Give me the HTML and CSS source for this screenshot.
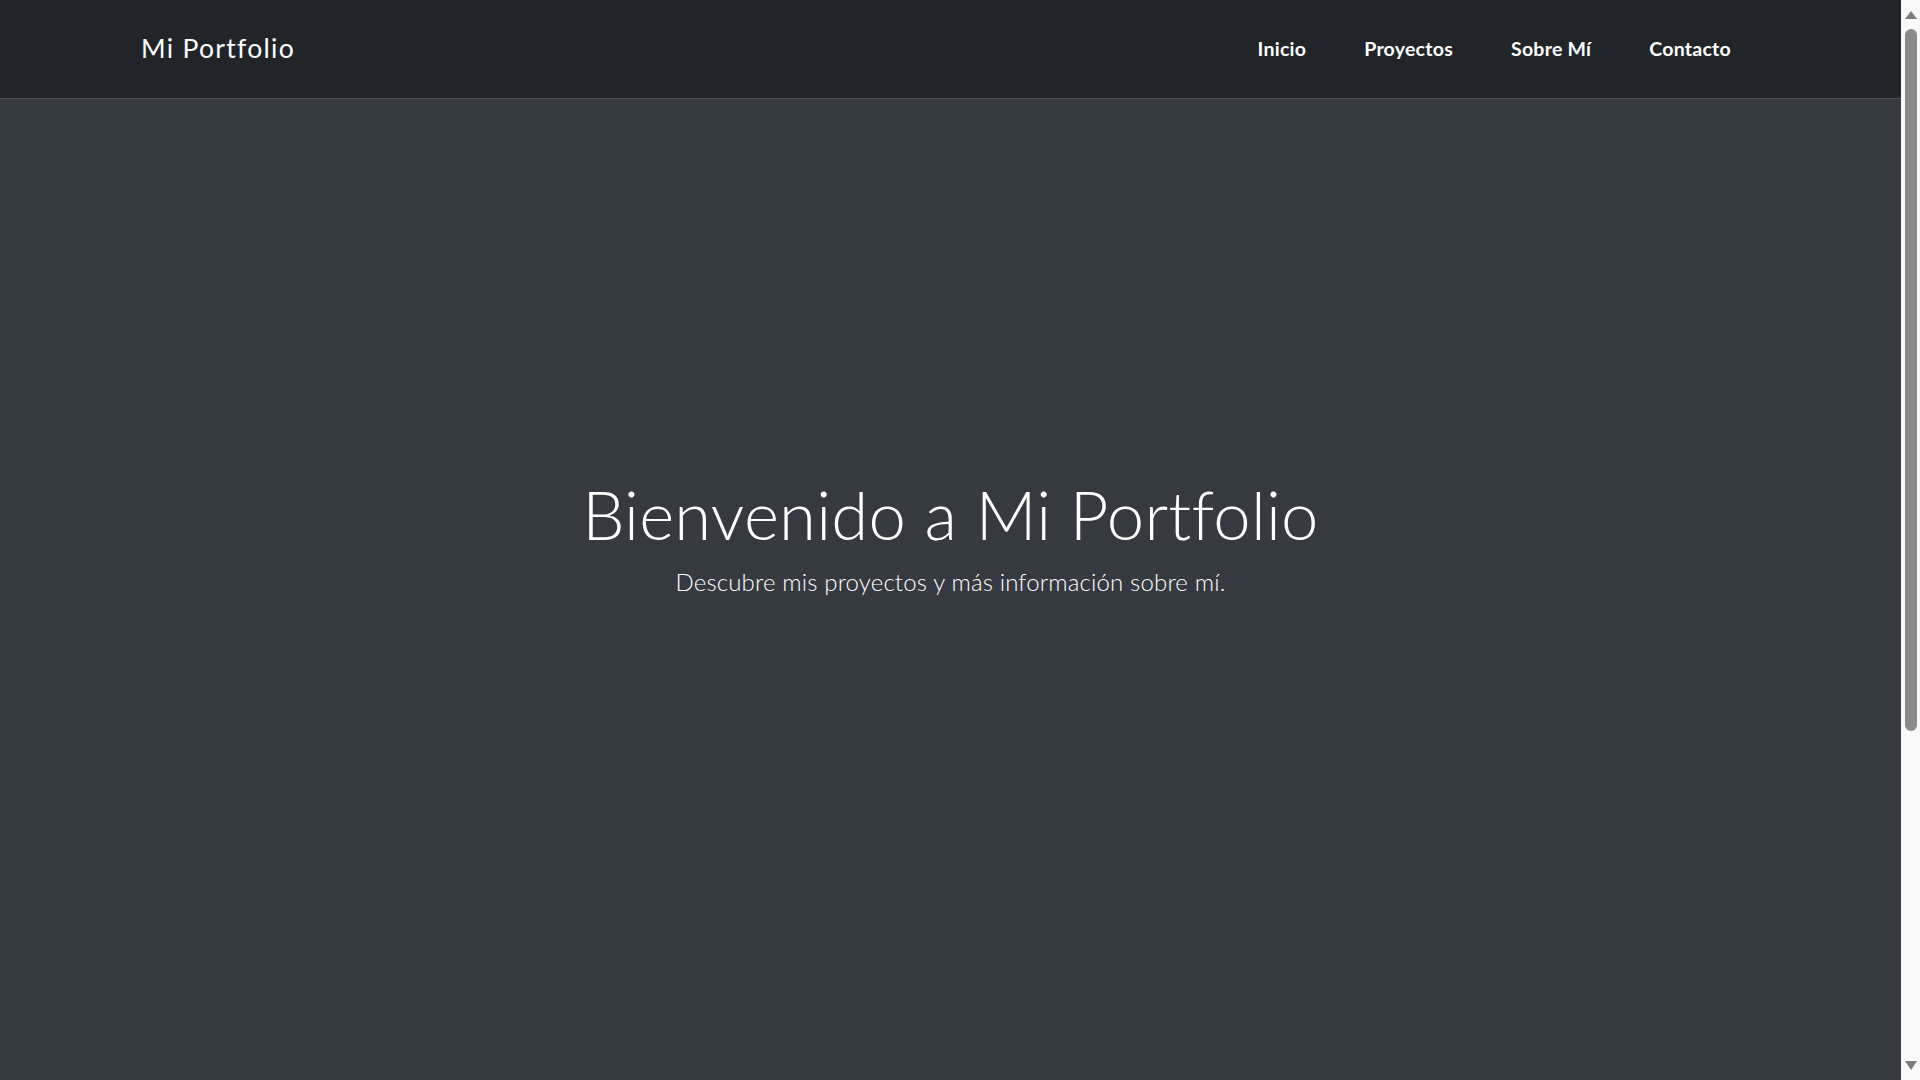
FILE: index.html
```html
<!DOCTYPE html>
<html lang="es">
<head>
<meta charset="utf-8">
<title>Mi Portfolio</title>
<link rel="stylesheet" href="styles.css">
</head>
<body>
<div class="app">
  <div class="page">
    <header class="navbar">
      <a class="brand" href="#">Mi Portfolio</a>
      <nav class="nav">
        <a class="nav-link" href="#inicio">Inicio</a>
        <a class="nav-link" href="#proyectos">Proyectos</a>
        <a class="nav-link" href="#sobre">Sobre Mí</a>
        <a class="nav-link" href="#contacto">Contacto</a>
      </nav>
    </header>
    <main class="hero" id="inicio">
      <h1 class="hero-title">Bienvenido a Mi Portfolio</h1>
      <p class="hero-lead">Descubre mis proyectos y más información sobre mí.</p>
    </main>
  </div>
  <div class="scrollbar" aria-hidden="true">
    <svg class="sb-arrow" width="12" height="8" viewBox="0 0 12 8"><polygon points="6,0 12,8 0,8" fill="#7d7d7d"/></svg>
    <div class="sb-thumb"></div>
    <div class="sb-space"></div>
    <svg class="sb-arrow" width="12" height="9" viewBox="0 0 12 9"><polygon points="0,0 12,0 6,9" fill="#7d7d7d"/></svg>
  </div>
</div>
</body>
</html>
```

FILE: styles.css
```css
* { box-sizing: border-box; }
html, body { margin: 0; padding: 0; }
body {
  font-family: Lato, "Open Sans", "Liberation Sans", sans-serif;
  background: #343a40;
  color: #fff;
  overflow: hidden;
}
a { text-decoration: none; color: inherit; }

.app {
  display: flex;
  height: 100vh;
}
.page {
  flex: 1;
  display: flex;
  flex-direction: column;
  min-width: 0;
}

.navbar {
  flex: 0 0 auto;
  height: 99px;
  padding: 0 141px;
  display: flex;
  align-items: center;
  justify-content: space-between;
  background: #212529;
  border-bottom: 1px solid #4a4e54;
}
.brand {
  font-size: 26.5px;
  font-weight: 400;
  line-height: 1.2;
  letter-spacing: 1.3px;
  color: #fff;
}
.nav {
  display: flex;
  align-items: center;
}
.nav-link {
  padding: 0 29px;
  font-size: 19.5px;
  font-weight: 700;
  line-height: 1.2;
  letter-spacing: 0.25px;
  color: #fff;
}

.hero {
  flex: 1;
  display: flex;
  flex-direction: column;
  align-items: center;
  justify-content: center;
  padding-bottom: 108px;
  text-align: center;
  background: #343a40;
}
.hero-title {
  margin: 0 0 14px;
  font-size: 67px;
  font-weight: 300;
  line-height: 1.2;
  letter-spacing: 0.25px;
}
.hero-lead {
  margin: 0;
  font-size: 24px;
  font-weight: 300;
  line-height: 1.2;
  letter-spacing: 0.15px;
}

.scrollbar {
  flex: 0 0 19px;
  display: flex;
  flex-direction: column;
  align-items: flex-start;
  padding: 11px 3px 10px 4px;
  background: #f9f9f9;
}
.sb-arrow { display: block; flex: 0 0 auto; }
.sb-thumb {
  margin-top: 10px;
  width: 12px;
  height: 702px;
  border-radius: 6px;
  background: #8b8b8b;
}
.sb-space { flex: 1; }
```
